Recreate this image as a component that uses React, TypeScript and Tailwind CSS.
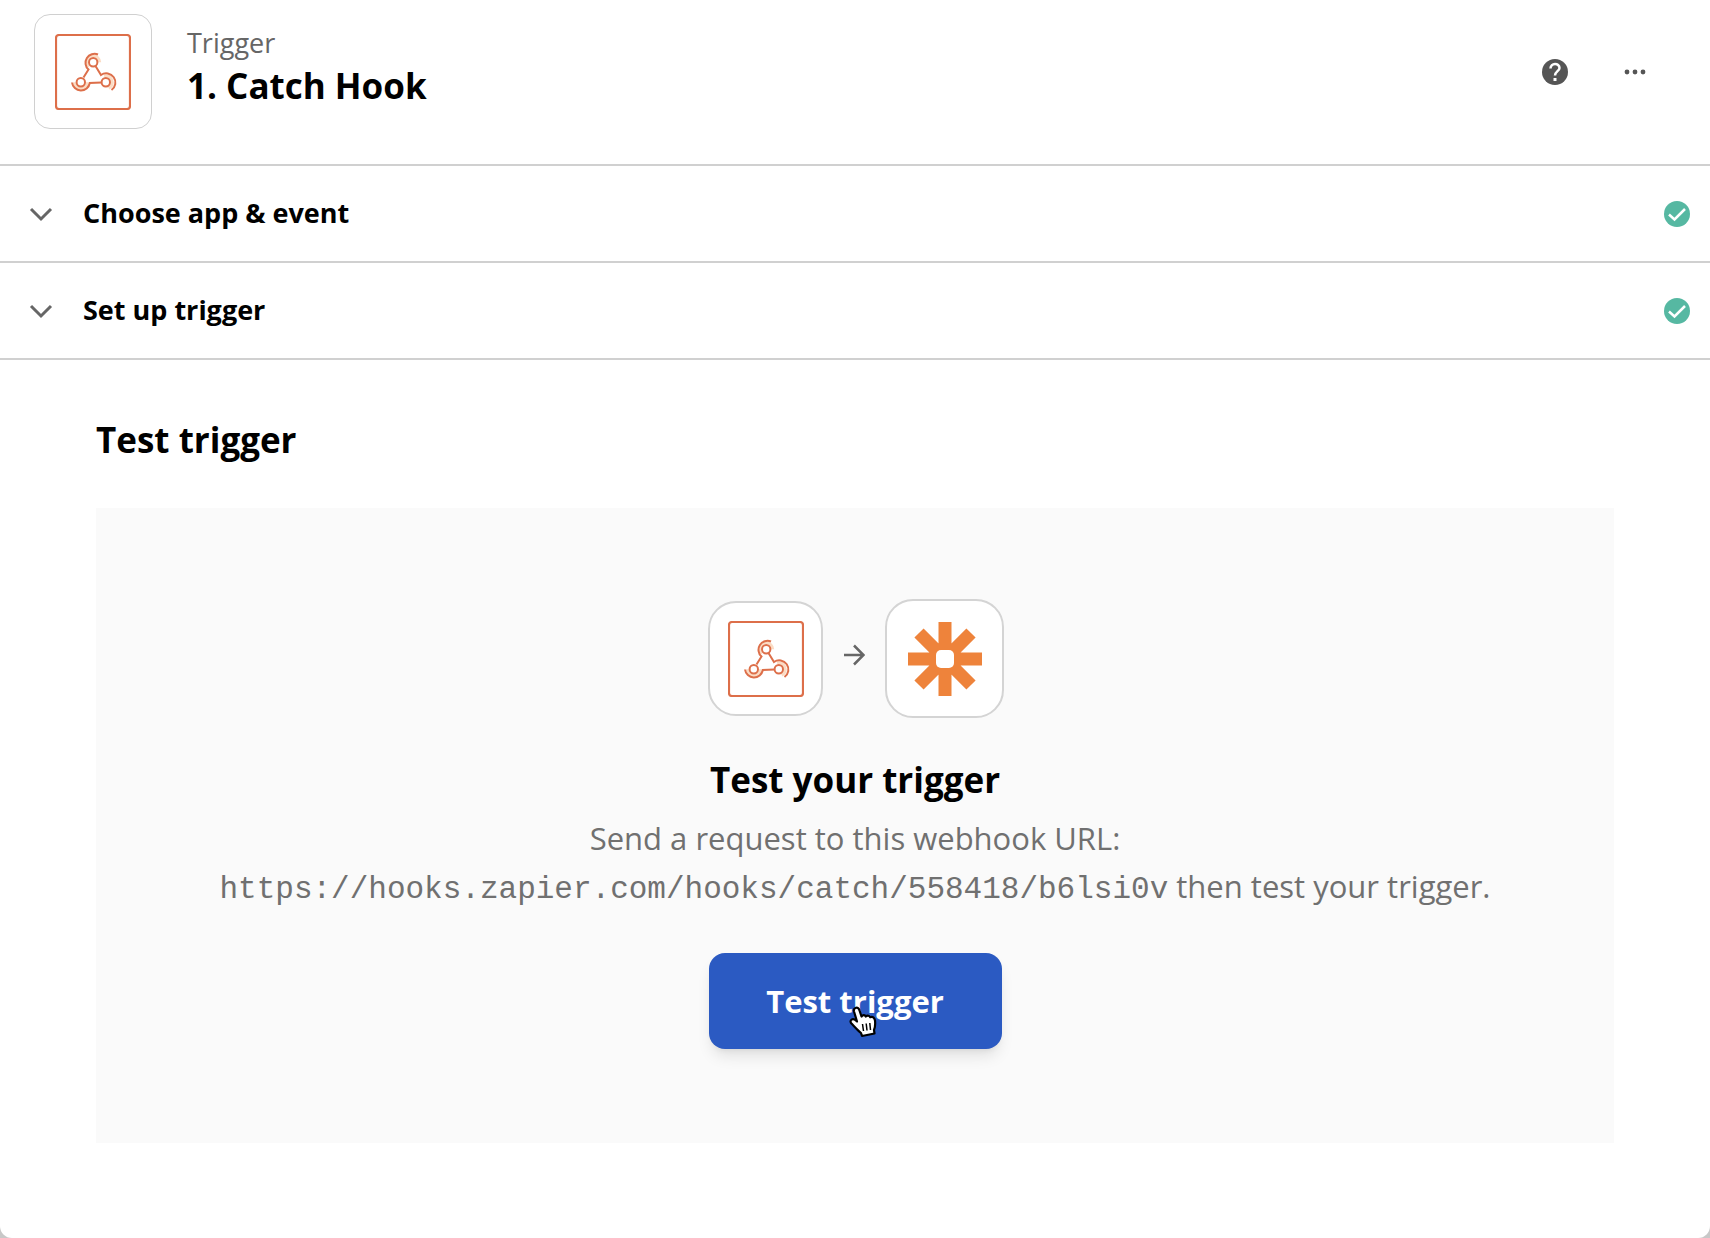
import { useState } from "react"

interface IStep {
  id: string
  title: string
}

const steps: IStep[] = [
  { id: "choose-app", title: "Choose app & event" },
  { id: "set-up", title: "Set up trigger" },
]

const WEBHOOK_URL = "https://hooks.zapier.com/hooks/catch/558418/b6lsi0v"

// Each arm is an outer arc that runs into the next node
const webhookArms = [
  "M43 20.5A9 9 0 0 0 33.5 35.5L28.5 43.5",
  "M17 48.5A9 9 0 0 0 34.8 49L46.5 48.5",
  "M40.5 32L46 41A9 9 0 0 1 56.5 56",
]

function WebhookIcon() {
  return (
    <svg viewBox="0 0 76 76" className="size-19" fill="none" stroke="#dd6f4a" aria-hidden="true">
      <rect x="1" y="1" width="74" height="74" rx="3" strokeWidth="2.2" />
      <g stroke="#fbdcc4" strokeWidth="3">
        <circle cx="38.2" cy="28.3" r="6.5" strokeDasharray="26 15" strokeDashoffset="-15" />
        <circle cx="25.8" cy="48.3" r="6.5" strokeDasharray="20 21" />
        <circle cx="50.8" cy="48.3" r="6.5" strokeDasharray="20 21" strokeDashoffset="13" />
      </g>
      <g strokeWidth="2">
        {webhookArms.map((d) => (
          <path key={d} d={d} />
        ))}
        <g fill="#fff">
          <circle cx="38.2" cy="28.3" r="4.2" />
          <circle cx="25.8" cy="48.3" r="4.2" />
          <circle cx="50.8" cy="48.3" r="4.2" />
        </g>
      </g>
    </svg>
  )
}

function ZapierIcon() {
  return (
    <svg viewBox="0 0 74 74" className="size-[74px]" aria-hidden="true">
      <g stroke="#ee833b" strokeWidth="13">
        <path d="M37 0V74M0 37H74M11 11L63 63M63 11L11 63" />
      </g>
      <rect x="28" y="28" width="18" height="18" rx="5" fill="#fff" />
    </svg>
  )
}

function ChevronIcon() {
  return (
    <svg viewBox="0 0 24 24" className="size-6" fill="none" stroke="#666" strokeWidth="3" aria-hidden="true">
      <path d="M2 7L12 17L22 7" />
    </svg>
  )
}

function CheckIcon() {
  return (
    <svg viewBox="0 0 26 26" className="size-[26px]" aria-hidden="true">
      <circle cx="13" cy="13" r="13" fill="#56b8a2" />
      <path d="M5 13.5L10.5 18.5L21 8" fill="none" stroke="#fff" strokeWidth="2.5" />
    </svg>
  )
}

function HandCursor() {
  return (
    <svg viewBox="0 0 28 32" className="pointer-events-none absolute top-[53px] left-[140px] h-8 w-7" aria-hidden="true">
      <path
        d="M6.5 2C8.500 1 10 2.500 10.500 4.500L12.500 10.500C14 8.500 16 9 16.800 10.500C18.500 9 20.500 9.800 21.200 11.200C23.500 10 25.500 11.500 26 14.500C26.500 19 25.800 22 25 24L25.500 27.500L13 30L12 27C8.500 24 5 20 2 17C0.500 14 3.500 12.500 5.500 13.500L8 15.500L5 5.500C4.500 3.500 5 2.500 6.500 2Z"
        fill="#fff"
        stroke="#000"
        strokeWidth="2.200"
        strokeLinejoin="round"
      />
      <path d="M13.500 18L14.500 25M17.200 17.500L18 24.500M20.800 17L21.500 24" stroke="#000" strokeWidth="1.500" />
    </svg>
  )
}

export default function App() {
  const [openStep, setOpenStep] = useState<string | null>(null)

  return (
    <div className="bg-[#c8c8c8] font-['Open_Sans',sans-serif] text-black">
      <main className="min-h-screen rounded-b-xl bg-white">
        <header className="flex h-[166px] items-start justify-between border-b-2 border-[#d0d0d0] pt-3.5 pr-[60px] pl-[34px]">
          <div className="flex gap-[35px]">
            <div className="flex h-[115px] w-[118px] items-center justify-center rounded-2xl border border-[#d0d0d0]">
              <WebhookIcon />
            </div>
            <div className="pt-[11px]">
              <p className="text-[27px] leading-9 text-[#666]">Trigger</p>
              <h1 className="text-[35px] leading-[50px] font-bold">1. Catch Hook</h1>
            </div>
          </div>

          <div className="flex h-[115px] items-center gap-[52px]">
            <button type="button" aria-label="Help">
              <svg viewBox="0 0 26 26" className="size-[26px]" aria-hidden="true">
                <circle cx="13" cy="13" r="13" fill="#555" />
                <path d="M8.500 9.500C8.500 3.500 17.500 3.500 17.500 9C17.500 12 13 12.500 13 16.500" fill="none" stroke="#fff" strokeWidth="2.500" />
                <path d="M11.500 19H14.500V22H11.500Z" fill="#fff" />
              </svg>
            </button>
            <button type="button" aria-label="More options">
              <svg viewBox="0 0 30 26" className="h-[26px] w-[30px]" fill="#555" aria-hidden="true">
                <circle cx="7" cy="13" r="2.400" />
                <circle cx="15" cy="13" r="2.400" />
                <circle cx="23" cy="13" r="2.400" />
              </svg>
            </button>
          </div>
        </header>

        {steps.map((step) => (
          <button
            key={step.id}
            type="button"
            aria-expanded={openStep === step.id}
            onClick={() => setOpenStep(openStep === step.id ? null : step.id)}
            className="flex h-[97px] w-full items-center border-b-2 border-[#d0d0d0] pr-5 pl-[29px] text-left"
          >
            <ChevronIcon />
            <span className="ml-[30px] flex-1 text-[27px] font-bold">{step.title}</span>
            <CheckIcon />
          </button>
        ))}

        <section className="px-24 pt-[54px]">
          <h2 className="text-[35px] leading-[52px] font-bold">Test trigger</h2>

          <div className="mt-[42px] flex flex-col items-center bg-[#fafafa] pt-[91px] pb-[94px] text-center">
            <div className="flex items-center pl-0.5">
              <div className="flex size-[115px] items-center justify-center rounded-[28px] border-2 border-[#d4d4d4] bg-white">
                <WebhookIcon />
              </div>
              <svg viewBox="0 0 22 22" className="mx-5 mb-2 size-[22px]" fill="none" stroke="#666" strokeWidth="2.500" aria-hidden="true">
                <path d="M1 11H20M11 1.500L20.500 11L11 20.500" />
              </svg>
              <div className="flex size-[119px] items-center justify-center rounded-[28px] border-2 border-[#d4d4d4] bg-white">
                <ZapierIcon />
              </div>
            </div>

            <h3 className="mt-9 text-[35px] leading-[52px] font-bold">Test your trigger</h3>
            <p className="mt-2 text-[31px] leading-12 text-[#707070]">
              Send a request to this webhook URL:
              <br />
              <code className="font-['Liberation_Mono',monospace]">{WEBHOOK_URL}</code> then test your trigger.
            </p>

            <button
              type="button"
              className="relative mt-[39px] h-24 w-[293px] cursor-pointer rounded-2xl bg-[#2b5ac2] text-[31px] font-bold text-white shadow-lg"
            >
              Test trigger
              <HandCursor />
            </button>
          </div>
        </section>
      </main>
    </div>
  )
}
